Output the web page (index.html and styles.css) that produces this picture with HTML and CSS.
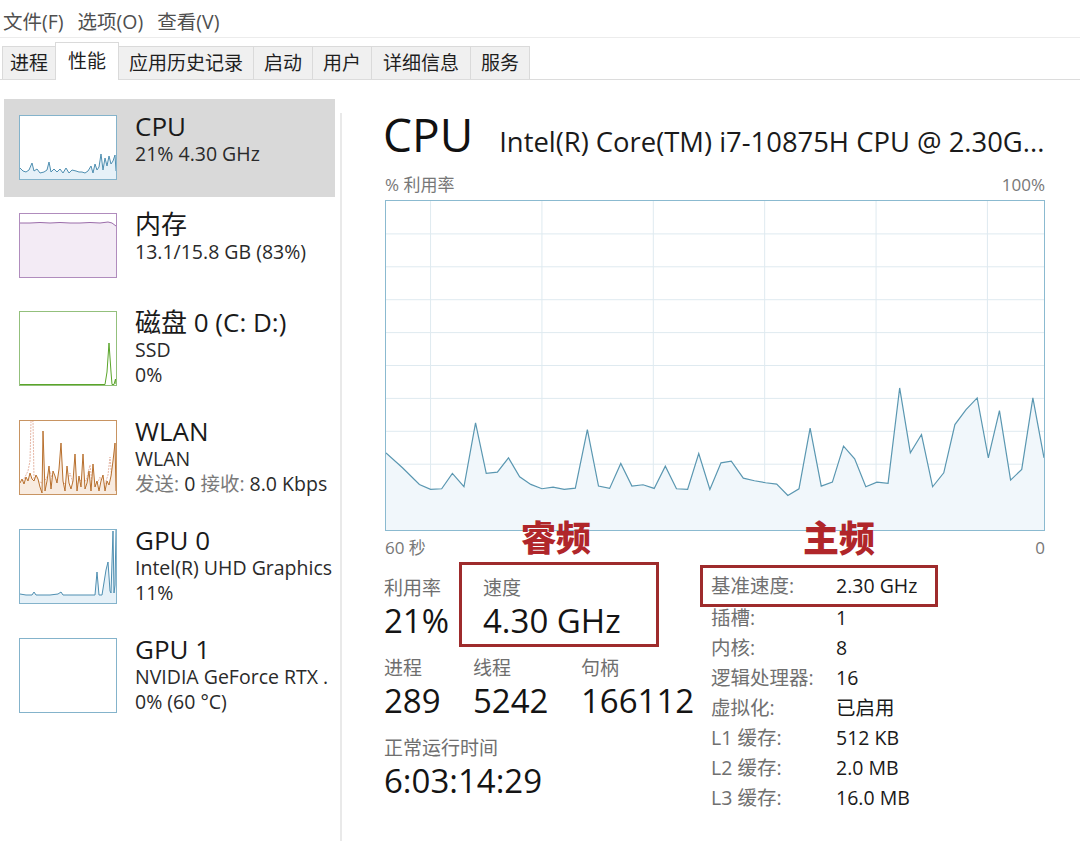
FILE: index.html
```html
<!DOCTYPE html>
<html lang="zh-CN">
<head>
<meta charset="utf-8">
<title>任务管理器 - 性能</title>
<link rel="stylesheet" href="styles.css">
</head>
<body>
<div class="menubar">
  <span>文件(F)</span><span>选项(O)</span><span>查看(V)</span>
</div>
<div class="tabs">
  <div class="tab first">进程</div>
  <div class="tab active">性能</div>
  <div class="tab">应用历史记录</div>
  <div class="tab">启动</div>
  <div class="tab">用户</div>
  <div class="tab wide">详细信息</div>
  <div class="tab">服务</div>
</div>
<div class="main">
  <div class="sidebar">
    <div class="item active">
      <div class="thumb cpu">
        <svg viewBox="0 0 96 63" preserveAspectRatio="none">
          <polygon class="f" points="0,52 3,55 6,56 9,54 12,47 14,55 17,53 20,57 24,56 27,54 29,46 31,56 34,53 37,56 40,53 43,57 46,52 49,57 52,54 56,55 59,56 62,56 65,57 68,55 71,50 73,57 75,48 77,54 79,51 81,38 83,54 85,42 87,50 89,40 91,48 93,45 95,39 96,55 96,63 0,63"/>
          <polyline class="l" points="0,52 3,55 6,56 9,54 12,47 14,55 17,53 20,57 24,56 27,54 29,46 31,56 34,53 37,56 40,53 43,57 46,52 49,57 52,54 56,55 59,56 62,56 65,57 68,55 71,50 73,57 75,48 77,54 79,51 81,38 83,54 85,42 87,50 89,40 91,48 93,45 95,39 96,55"/>
        </svg>
      </div>
      <div class="info">
        <div class="name">CPU</div>
        <div class="sub">21% 4.30 GHz</div>
      </div>
    </div>
    <div class="item">
      <div class="thumb mem">
        <svg viewBox="0 0 96 63" preserveAspectRatio="none">
          <polygon class="f" points="0,9 10,9 20,8.5 30,9 40,8.5 50,9 60,9 70,8.5 80,9 88,8 92,9 96,12 96,63 0,63"/>
          <polyline class="l" points="0,9 10,9 20,8.5 30,9 40,8.5 50,9 60,9 70,8.5 80,9 88,8 92,9 96,12"/>
        </svg>
      </div>
      <div class="info">
        <div class="name">内存</div>
        <div class="sub">13.1/15.8 GB (83%)</div>
      </div>
    </div>
    <div class="item">
      <div class="thumb disk tall">
        <svg viewBox="0 0 96 73" preserveAspectRatio="none">
          <polyline class="l" points="0,72.5 85,72.5 87,60 89,31 91,60 92,72.5 94,72.5 95.5,67 96,72"/>
        </svg>
      </div>
      <div class="info">
        <div class="name">磁盘 0 (C: D:)</div>
        <div class="sub">SSD</div>
        <div class="sub">0%</div>
      </div>
    </div>
    <div class="item">
      <div class="thumb wlan tall">
        <svg viewBox="0 0 96 73" preserveAspectRatio="none">
          <polyline class="l2" points="0,66 4,58 8,50 10,40 11,0 13,0 14,58 18,60 22,62 26,58 30,50 34,64 38,56 42,60 46,64 50,52 54,66 58,62 62,58 66,60 70,44 72,62 76,66 80,56 84,66 88,54 90,36 92,60 96,64"/>
          <polygon class="f" points="0,62 2,58 4,63 6,56 8,60 10,52 12,58 14,60 16,54 18,58 20,66 22,72 23,10 25,70 27,60 29,45 31,68 33,50 35,55 37,62 39,48 41,22 43,60 45,70 47,45 49,62 51,68 53,60 55,33 57,70 59,55 61,66 63,33 65,68 67,62 69,50 71,70 73,43 75,66 77,60 79,70 81,60 83,54 85,70 87,60 89,64 91,55 93,40 95,22 96,70 96,73 0,73"/>
          <polyline class="l" points="0,62 2,58 4,63 6,56 8,60 10,52 12,58 14,60 16,54 18,58 20,66 22,72 23,10 25,70 27,60 29,45 31,68 33,50 35,55 37,62 39,48 41,22 43,60 45,70 47,45 49,62 51,68 53,60 55,33 57,70 59,55 61,66 63,33 65,68 67,62 69,50 71,70 73,43 75,66 77,60 79,70 81,60 83,54 85,70 87,60 89,64 91,55 93,40 95,22 96,70"/>
        </svg>
      </div>
      <div class="info">
        <div class="name">WLAN</div>
        <div class="sub">WLAN</div>
        <div class="sub"><span class="muted">发送:</span> 0 <span class="muted">接收:</span> 8.0 Kbps</div>
      </div>
    </div>
    <div class="item">
      <div class="thumb gpu tall">
        <svg viewBox="0 0 96 73" preserveAspectRatio="none">
          <polygon class="f" points="0,64 6,65 12,65 14,62 16,65 30,65 38,64 41,62 43,65 60,65 75,65 77,42 79,65 82,65 86,40 88,32 90,61 91,63 93,1 94,63 95,55 96,0 96,73 0,73"/>
          <polyline class="l" points="0,64 6,65 12,65 14,62 16,65 30,65 38,64 41,62 43,65 60,65 75,65 77,42 79,65 82,65 86,40 88,32 90,61 91,63 93,1 94,63 95,55 96,0"/>
        </svg>
      </div>
      <div class="info">
        <div class="name">GPU 0</div>
        <div class="sub">Intel(R) UHD Graphics</div>
        <div class="sub">11%</div>
      </div>
    </div>
    <div class="item">
      <div class="thumb gpu tall"></div>
      <div class="info">
        <div class="name">GPU 1</div>
        <div class="sub">NVIDIA GeForce RTX .</div>
        <div class="sub">0% (60 °C)</div>
      </div>
    </div>
  </div>
  <div class="divider"></div>
  <div class="detail">
    <div class="head">
      <span class="big">CPU</span>
      <span class="model">Intel(R) Core(TM) i7-10875H CPU @ 2.30G...</span>
    </div>
    <div class="axis top"><span>% 利用率</span><span>100%</span></div>
    <div class="chart">
      <svg viewBox="33 33 1477 989" preserveAspectRatio="none">
        <g class="grid">
          <line x1="33" x2="1510" y1="131.9" y2="131.9"/>
          <line x1="33" x2="1510" y1="230.8" y2="230.8"/>
          <line x1="33" x2="1510" y1="329.7" y2="329.7"/>
          <line x1="33" x2="1510" y1="428.6" y2="428.6"/>
          <line x1="33" x2="1510" y1="527.5" y2="527.5"/>
          <line x1="33" x2="1510" y1="626.4" y2="626.4"/>
          <line x1="33" x2="1510" y1="725.3" y2="725.3"/>
          <line x1="33" x2="1510" y1="824.2" y2="824.2"/>
          <line x1="33" x2="1510" y1="923.1" y2="923.1"/>
          <line x1="133" x2="133" y1="33" y2="1022"/>
          <line x1="383" x2="383" y1="33" y2="1022"/>
          <line x1="633" x2="633" y1="33" y2="1022"/>
          <line x1="883" x2="883" y1="33" y2="1022"/>
          <line x1="1133" x2="1133" y1="33" y2="1022"/>
          <line x1="1383" x2="1383" y1="33" y2="1022"/>
        </g>
        <polygon class="area" points="33,790 70,835 108,885 133,900 158,898 182,852 208,892 234,700 258,852 283,848 308,805 333,862 358,885 383,898 408,893 433,900 458,896 485,720 510,890 535,897 560,822 585,890 610,886 635,897 660,830 685,898 710,900 735,792 760,900 785,820 808,815 835,866 860,874 885,880 910,884 935,918 960,898 985,716 1010,890 1035,878 1060,770 1085,808 1110,892 1135,878 1160,882 1186,595 1210,790 1235,735 1260,892 1285,850 1310,705 1335,660 1360,625 1385,805 1410,663 1435,872 1460,840 1485,625 1510,805 1510,1022 33,1022"/>
        <polyline class="line" points="33,790 70,835 108,885 133,900 158,898 182,852 208,892 234,700 258,852 283,848 308,805 333,862 358,885 383,898 408,893 433,900 458,896 485,720 510,890 535,897 560,822 585,890 610,886 635,897 660,830 685,898 710,900 735,792 760,900 785,820 808,815 835,866 860,874 885,880 910,884 935,918 960,898 985,716 1010,890 1035,878 1060,770 1085,808 1110,892 1135,878 1160,882 1186,595 1210,790 1235,735 1260,892 1285,850 1310,705 1335,660 1360,625 1385,805 1410,663 1435,872 1460,840 1485,625 1510,805"/>
      </svg>
    </div>
    <div class="axis bottom"><span>60 秒</span><span>0</span></div>
    <div class="stats">
      <div class="left">
        <div class="row r1">
          <div class="stat util">
            <div class="lbl">利用率</div>
            <div class="val">21%</div>
          </div>
          <div class="stat speed mark">
            <span class="note">睿频</span>
            <div class="lbl">速度</div>
            <div class="val">4.30 GHz</div>
          </div>
        </div>
        <div class="row r2">
          <div class="stat c1">
            <div class="lbl">进程</div>
            <div class="val">289</div>
          </div>
          <div class="stat c2">
            <div class="lbl">线程</div>
            <div class="val">5242</div>
          </div>
          <div class="stat">
            <div class="lbl">句柄</div>
            <div class="val">166112</div>
          </div>
        </div>
        <div class="row r3">
          <div class="stat">
            <div class="lbl">正常运行时间</div>
            <div class="val">6:03:14:29</div>
          </div>
        </div>
      </div>
      <div class="specs">
        <div class="spec hl mark"><span class="note note2">主频</span><span class="k">基准速度:</span><span class="v">2.30 GHz</span></div>
        <div class="spec"><span class="k">插槽:</span><span class="v">1</span></div>
        <div class="spec"><span class="k">内核:</span><span class="v">8</span></div>
        <div class="spec"><span class="k">逻辑处理器:</span><span class="v">16</span></div>
        <div class="spec"><span class="k">虚拟化:</span><span class="v">已启用</span></div>
        <div class="spec"><span class="k">L1 缓存:</span><span class="v">512 KB</span></div>
        <div class="spec"><span class="k">L2 缓存:</span><span class="v">2.0 MB</span></div>
        <div class="spec"><span class="k">L3 缓存:</span><span class="v">16.0 MB</span></div>
      </div>
    </div>
  </div>
</div>
</body>
</html>
```

FILE: styles.css
```css
* { box-sizing: border-box; }
html, body {
  margin: 0;
  padding: 0;
  background: #ffffff;
}
body {
  width: 1080px;
  height: 861px;
  overflow: hidden;
  font-family: "Open Sans", "Noto Sans CJK SC", sans-serif;
  color: #1a1a1a;
}

/* menu */
.menubar {
  height: 38px;
  padding: 7px 0 0 3px;
  display: flex;
  gap: 14px;
  font-size: 19.5px;
  line-height: 30px;
  color: #4f4f4f;
  border-bottom: 1px solid #ececec;
}

/* tabs */
.tabs {
  height: 42px;
  display: flex;
  align-items: flex-end;
  padding-left: 2px;
  border-bottom: 1px solid #dcdcdc;
}
.tab {
  height: 33px;
  padding: 0 10px;
  margin-right: -1px;
  font-size: 19px;
  line-height: 33px;
  color: #1e1e1e;
  background: #f0f0f0;
  border: 1px solid #dadada;
  border-bottom: none;
}
.tab.first { padding: 0 7px; }
.tab.wide { padding: 0 11px; }
.tab.active {
  height: 38px;
  margin-bottom: -1px;
  padding: 0 12px;
  line-height: 36px;
  background: #ffffff;
  position: relative;
}

/* main */
.main {
  display: flex;
  height: 781px;
}
.sidebar {
  flex: none;
  width: 335px;
  padding: 19px 0 0 4px;
}
.item {
  display: flex;
  gap: 18px;
  padding: 16px 0 17px 15px;
}
.item.active { background: #d9d9d9; }
.thumb {
  flex: none;
  width: 98px;
  height: 65px;
  border: 1.5px solid #84b3cb;
  background: #ffffff;
}
.thumb.tall { height: 75px; }
.thumb svg { display: block; width: 100%; height: 100%; }
.thumb .l { fill: none; stroke-width: 1; }
.thumb.cpu .f, .thumb.gpu .f { fill: #e6f1f8; }
.thumb.cpu .l, .thumb.gpu .l { stroke: #4f8fb1; }
.thumb.mem { border-color: #b08cbd; }
.thumb.mem .f { fill: #f3ebf5; }
.thumb.mem .l { stroke: #9a6ca9; }
.thumb.disk { border-color: #93c07c; }
.thumb.disk .l { stroke: #5aa52a; }
.thumb.wlan { border-color: #c89462; }
.thumb.wlan .f { fill: #f8ebe0; }
.thumb.wlan .l { stroke: #b8702e; }
.thumb.wlan .l2 { fill: none; stroke: #e6b7a6; stroke-width: 1; stroke-dasharray: 2 1; }

.info { min-width: 0; white-space: nowrap; }
.name {
  font-size: 26px;
  line-height: 30px;
  margin-top: -4px;
  color: #1a1a1a;
}
.sub {
  font-size: 19.5px;
  line-height: 25px;
  color: #2a2a2a;
}
.muted { color: #7a7a7a; }

.divider {
  flex: none;
  width: 2px;
  margin: 33px 0 20px 5px;
  background: #e9e9e9;
}

/* detail */
.detail {
  flex: 1;
  min-width: 0;
  padding: 26px 35px 0 41px;
}
.head {
  display: flex;
  align-items: baseline;
  gap: 26px;
  height: 56px;
  white-space: nowrap;
}
.big {
  font-size: 46px;
  line-height: 56px;
  color: #111;
}
.model {
  font-size: 27.4px;
  line-height: 56px;
  color: #1a1a1a;
}
.axis {
  display: flex;
  justify-content: space-between;
  font-size: 17px;
  line-height: 20px;
  color: #777;
  padding-left: 2px;
}
.axis.top { margin-top: 13px; }
.axis.bottom { margin-top: 7px; }
.chart {
  margin: 5px 0 0 2px;
  height: 331px;
  border: 1px solid #8bbad0;
}
.chart svg { display: block; width: 100%; height: 100%; }
.grid line {
  stroke: #dfeaf0;
  stroke-width: 1;
  vector-effect: non-scaling-stroke;
}
.chart .area { fill: #f1f7fb; }
.chart .line {
  fill: none;
  stroke: #5a97b1;
  stroke-width: 1.2;
  vector-effect: non-scaling-stroke;
}

/* stats */
.stats {
  display: flex;
  margin-top: 4px;
  padding-left: 1px;
}
.left { width: 327px; }
.row { display: flex; }
.row.r2 { margin-top: 10px; }
.row.r3 { margin-top: 14px; }
.stat .lbl {
  font-size: 19px;
  line-height: 22px;
  color: #6f6f6f;
}
.stat .val {
  font-size: 33px;
  line-height: 44px;
  color: #141414;
  white-space: nowrap;
}
.stat.util { width: 75px; padding-top: 15px; }
.stat.c1 { width: 89px; }
.stat.c2 { width: 108px; }
.mark {
  position: relative;
  border: 3px solid #9e2b2c;
}
.stat.speed {
  width: 200px;
  padding: 12px 0 1px 21px;
}
.note {
  position: absolute;
  left: 59px;
  top: -48px;
  font-family: "Noto Sans CJK SC", sans-serif;
  font-weight: 900;
  font-size: 35px;
  line-height: 38px;
  color: #b0262a;
  white-space: nowrap;
}
.note2 {
  left: 100px;
  top: -51px;
  font-size: 36px;
}

.specs {
  padding-top: 3px;
}
.spec {
  display: flex;
  font-size: 19.5px;
  line-height: 30px;
  white-space: nowrap;
}
.spec .k { width: 125px; color: #707070; }
.spec .v { color: #1a1a1a; }
.spec.hl {
  width: 238px;
  margin-left: -11px;
  padding: 3px 0 3px 8px;
  margin-bottom: -4px;
}
```
